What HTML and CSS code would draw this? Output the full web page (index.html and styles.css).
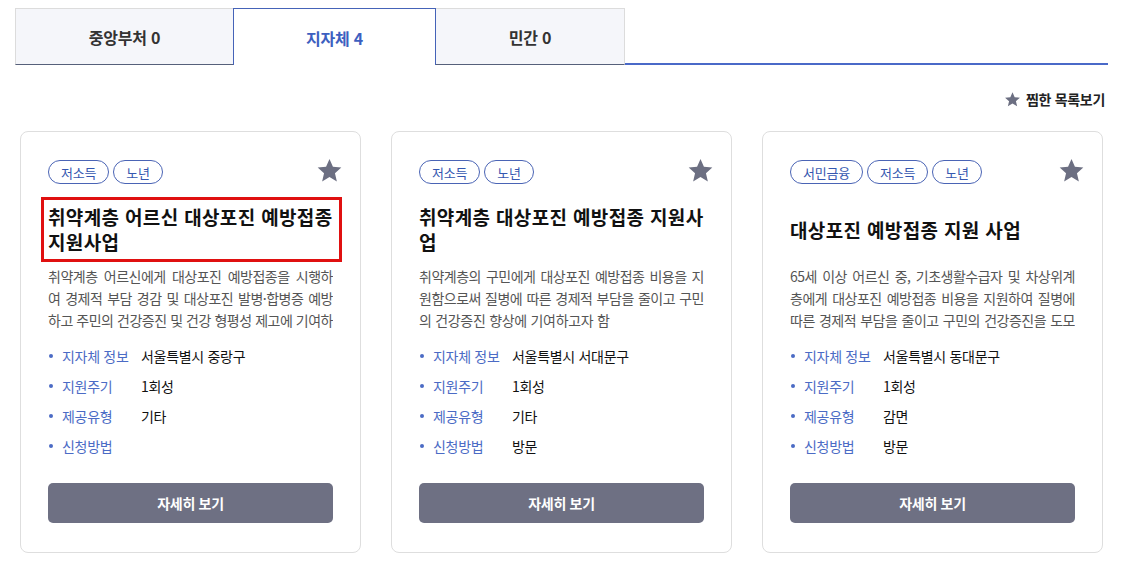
FILE: index.html
```html
<!DOCTYPE html>
<html lang="ko">
<head>
<meta charset="utf-8">
<title>지원사업</title>
<link rel="stylesheet" href="styles.css">
</head>
<body>
<div class="page">
  <div class="tabs">
    <div class="tab tab-1">중앙부처 0</div>
    <div class="tab tab-2 active">지자체 4</div>
    <div class="tab tab-3">민간 0</div>
    <div class="tab-fill"></div>
  </div>

  <div class="toolbar">
    <a class="fav-link"><svg class="fav-star" viewBox="0 0 24 24"><path d="M12 1.8l3.05 6.9 7.45.7-5.65 4.95 1.7 7.35L12 17.8l-6.55 3.9 1.7-7.35L1.5 9.4l7.45-.7z"/></svg>찜한 목록보기</a>
  </div>

  <div class="cards">
    <div class="card">
      <div class="card-head">
        <div class="tags"><span class="tag">저소득</span><span class="tag">노년</span></div>
        <svg class="star" viewBox="0 0 24 24"><path d="M12 1.8l3.05 6.9 7.45.7-5.65 4.95 1.7 7.35L12 17.8l-6.55 3.9 1.7-7.35L1.5 9.4l7.45-.7z"/></svg>
      </div>
      <h3 class="title highlighted"><span>취약계층 어르신 대상포진 예방접종 지원사업</span></h3>
      <p class="desc"><span class="ln">취약계층 어르신에게 대상포진 예방접종을 시행하</span><span class="ln">여 경제적 부담 경감 및 대상포진 발병·합병증 예방</span><span class="ln">하고 주민의 건강증진 및 건강 형평성 제고에 기여하</span><span class="rest">고자 함</span></p>
      <ul class="info">
        <li><span class="label">지자체 정보</span><span class="value">서울특별시 중랑구</span></li>
        <li><span class="label">지원주기</span><span class="value">1회성</span></li>
        <li><span class="label">제공유형</span><span class="value">기타</span></li>
        <li><span class="label">신청방법</span><span class="value"></span></li>
      </ul>
      <button class="detail-btn">자세히 보기</button>
    </div>

    <div class="card">
      <div class="card-head">
        <div class="tags"><span class="tag">저소득</span><span class="tag">노년</span></div>
        <svg class="star" viewBox="0 0 24 24"><path d="M12 1.8l3.05 6.9 7.45.7-5.65 4.95 1.7 7.35L12 17.8l-6.55 3.9 1.7-7.35L1.5 9.4l7.45-.7z"/></svg>
      </div>
      <h3 class="title"><span>취약계층 대상포진 예방접종 지원사업</span></h3>
      <p class="desc"><span class="ln">취약계층의 구민에게 대상포진 예방접종 비용을 지</span><span class="ln">원함으로써 질병에 따른 경제적 부담을 줄이고 구민</span>의 건강증진 향상에 기여하고자 함</p>
      <ul class="info">
        <li><span class="label">지자체 정보</span><span class="value">서울특별시 서대문구</span></li>
        <li><span class="label">지원주기</span><span class="value">1회성</span></li>
        <li><span class="label">제공유형</span><span class="value">기타</span></li>
        <li><span class="label">신청방법</span><span class="value">방문</span></li>
      </ul>
      <button class="detail-btn">자세히 보기</button>
    </div>

    <div class="card">
      <div class="card-head">
        <div class="tags"><span class="tag">서민금융</span><span class="tag">저소득</span><span class="tag">노년</span></div>
        <svg class="star" viewBox="0 0 24 24"><path d="M12 1.8l3.05 6.9 7.45.7-5.65 4.95 1.7 7.35L12 17.8l-6.55 3.9 1.7-7.35L1.5 9.4l7.45-.7z"/></svg>
      </div>
      <h3 class="title"><span>대상포진 예방접종 지원 사업</span></h3>
      <p class="desc"><span class="ln">65세 이상 어르신 중, 기초생활수급자 및 차상위계</span><span class="ln">층에게 대상포진 예방접종 비용을 지원하여 질병에</span><span class="ln">따른 경제적 부담을 줄이고 구민의 건강증진을 도모</span><span class="rest">하고자 함</span></p>
      <ul class="info">
        <li><span class="label">지자체 정보</span><span class="value">서울특별시 동대문구</span></li>
        <li><span class="label">지원주기</span><span class="value">1회성</span></li>
        <li><span class="label">제공유형</span><span class="value">감면</span></li>
        <li><span class="label">신청방법</span><span class="value">방문</span></li>
      </ul>
      <button class="detail-btn">자세히 보기</button>
    </div>
  </div>
</div>
</body>
</html>
```

FILE: styles.css
```css
* { box-sizing: border-box; }
html, body { margin: 0; padding: 0; background: #fff; }
body {
  font-family: "Noto Sans CJK KR", "Noto Sans", sans-serif;
  color: #111;
  width: 1124px;
  height: 573px;
  overflow: hidden;
}
.page {
  padding: 8px 16px 0 15px;
}

/* tabs */
.tabs {
  display: flex;
  height: 57px;
}
.tab {
  display: flex;
  align-items: center;
  justify-content: center;
  font-size: 16px;
  font-weight: 700;
  color: #333;
  background: #f5f6fa;
  border: 1px solid #dcdcdc;
  border-bottom: 1px solid #56607a;
  letter-spacing: -0.2px;
  padding-top: 1px;
}
.tab-1 { width: 218px; border-right: none; }
.tab-2 { width: 203px; }
.tab-3 { width: 189px; border-left: none; }
.tab.active {
  background: #fff;
  color: #3d5fc0;
  border: 1px solid #4563b8;
  border-bottom: none;
}
.tab-fill {
  flex: 1;
  border-bottom: 2px solid #4a69c8;
}

/* toolbar */
.toolbar {
  display: flex;
  justify-content: flex-end;
  padding: 24px 3px 0 0;
  height: 56px;
}
.fav-link {
  display: flex;
  align-items: center;
  gap: 5px;
  font-size: 14px;
  font-weight: 700;
  color: #222;
  height: 20px;
  letter-spacing: -0.3px;
}
.fav-star { width: 17px; height: 17px; fill: #6c6f82; }

/* cards */
.cards {
  display: grid;
  grid-template-columns: repeat(3, 341px);
  gap: 30px;
  padding-left: 5px;
  margin-top: 10px;
}
.card {
  border: 1px solid #dedede;
  border-radius: 8px;
  padding: 28px 27px 29px 27px;
  display: flex;
  flex-direction: column;
}
.card-head {
  display: flex;
  justify-content: space-between;
  align-items: center;
  height: 24px;
}
.tags { display: flex; gap: 4px; }
.tag {
  display: inline-flex;
  align-items: center;
  height: 24px;
  padding: 0 12px;
  border: 1px solid #4a64b5;
  border-radius: 12px;
  font-size: 13px;
  color: #3557b0;
  letter-spacing: -0.2px;
}
.star {
  width: 27px;
  height: 27px;
  fill: #6c6f82;
  margin-right: -10px;
  margin-top: -3px;
}

.title {
  position: relative;
  margin: 20px 0 0;
  height: 50px;
  display: flex;
  align-items: center;
  font-size: 19px;
  font-weight: 700;
  line-height: 25px;
  color: #111;
  word-break: break-all;
  letter-spacing: 0.35px;
}
.title.highlighted::after {
  content: "";
  position: absolute;
  top: -7px;
  bottom: -8px;
  left: -7px;
  right: -9px;
  border: 3px solid #e01010;
  pointer-events: none;
}

.desc {
  margin: 11px 0 0;
  font-size: 14px;
  line-height: 22px;
  color: #555;
  text-align: left;
  word-break: break-all;
  letter-spacing: -0.3px;
  height: 66px;
  overflow: hidden;
}
.desc .ln {
  display: block;
  white-space: nowrap;
  letter-spacing: -0.5px;
  text-align: justify;
  text-align-last: justify;
}
.desc .rest {
  display: block;
  visibility: hidden;
  height: 0;
}

.info {
  list-style: none;
  margin: 10px 0 0;
  padding: 0;
}
.info li {
  display: flex;
  align-items: center;
  height: 30px;
  font-size: 14px;
}
.info li::before {
  content: "";
  width: 4px;
  height: 4px;
  border-radius: 50%;
  background: #4b6bc5;
  margin: 0 9px 0 1px;
}
.label {
  width: 79px;
  color: #4b6bc5;
  letter-spacing: -0.3px;
}
.value { color: #111; letter-spacing: -0.3px; }

.detail-btn {
  margin-top: 22px;
  height: 40px;
  border: none;
  border-radius: 5px;
  background: #6e7083;
  color: #fff;
  font-family: inherit;
  font-size: 14px;
  font-weight: 700;
  letter-spacing: -0.3px;
  cursor: pointer;
}
```
